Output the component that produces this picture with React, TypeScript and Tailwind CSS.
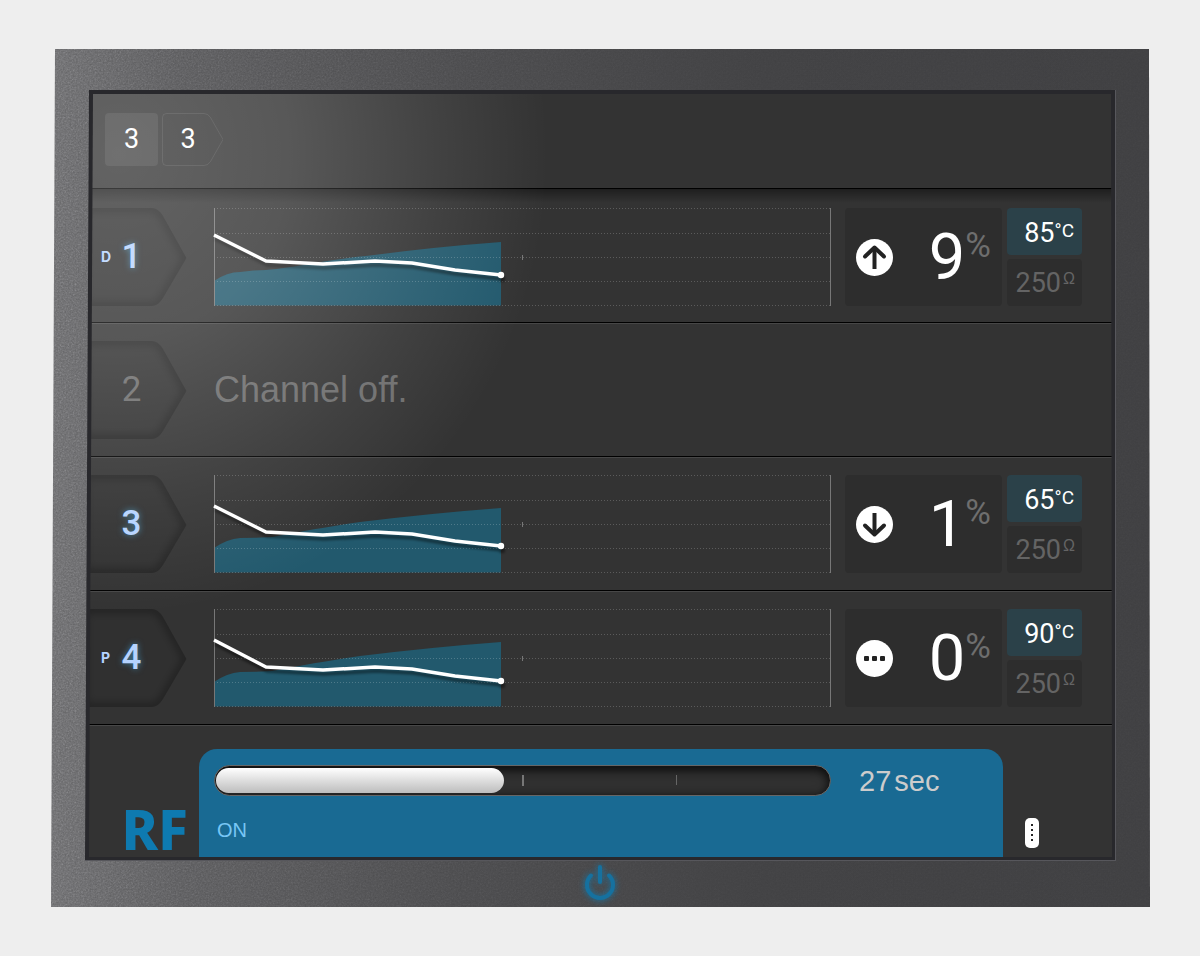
import React from 'react';
import clsx from 'clsx';

type Trend = 'up' | 'down' | 'steady';

type Channel = {
  id: number;
  tag?: string;
  on: boolean;
  trend?: Trend;
  percent?: number;
  temperature?: number;
  impedance?: number;
  area?: string;
  line?: string;
};

const EARLY_AREA =
  'M0 97.5V73Q13 64 26 64Q40 62 52 62C90 58 110 52 160 47Q220 39 287 34V97.5Z';
const LATE_AREA =
  'M0 97.5V73Q13 64 26 63Q42 63 58 62C80 58 110 52 146 47Q220 38 287 33V97.5Z';

const channels: Channel[] = [
  {
    id: 1,
    tag: 'D',
    on: true,
    trend: 'up',
    percent: 9,
    temperature: 85,
    impedance: 250,
    area: EARLY_AREA,
    line: '0,27 52,53 109,56 161,53 198,55 241,62 287,67',
  },
  { id: 2, on: false },
  {
    id: 3,
    on: true,
    trend: 'down',
    percent: 1,
    temperature: 65,
    impedance: 250,
    area: LATE_AREA,
    line: '0,31 52,57 109,60 161,57 198,59 241,66 287,71',
  },
  {
    id: 4,
    tag: 'P',
    on: true,
    trend: 'steady',
    percent: 0,
    temperature: 90,
    impedance: 250,
    area: LATE_AREA,
    line: '0,31 52,58 109,61 161,58 198,60 241,67 287,72',
  },
];

const TAG_PATH = 'M-6 0H63Q69 0 74 8L97.500 50L74 90Q69 98 63 98H-6Z';

const ChannelTag: React.FC<{ channel: Channel }> = ({ channel }) => (
  <button
    type="button"
    className="relative grid h-[98px] w-[98px] shrink-0 grid-cols-[30px_25px] items-center"
  >
    <svg className="absolute inset-0" width="98" height="98" viewBox="0 0 98 98" aria-hidden="true">
      <defs>
        <clipPath id={`tag-${channel.id}`}>
          <path d={TAG_PATH} />
        </clipPath>
        <filter id={`tag-blur-${channel.id}`}>
          <feGaussianBlur stdDeviation="4" />
        </filter>
      </defs>
      <g clipPath={`url(#tag-${channel.id})`}>
        <path d={TAG_PATH} fill="#000" fillOpacity="0.06" />
        <path
          d={TAG_PATH}
          fill="none"
          stroke="#000"
          strokeOpacity="0.4"
          strokeWidth="6"
          filter={`url(#tag-blur-${channel.id})`}
        />
      </g>
    </svg>
    <span className="relative pl-[12px] text-left font-['Inter'] text-[14px] leading-[98px] font-bold text-[#b5d3ff]">
      {channel.tag}
    </span>
    <span
      className={clsx(
        "relative text-center font-['Roboto'] text-[35px] leading-[94px]",
        channel.on ? 'font-medium text-[#b5d3ff] [text-shadow:0_0_6px_#3f7fa0]' : 'text-[#6c6c6c]'
      )}
    >
      {channel.id}
    </span>
  </button>
);

const Chart: React.FC<{ area?: string; line?: string }> = ({ area, line }) => (
  <svg
    className="h-[98px] min-w-0 flex-1 overflow-visible"
    viewBox="0 0 617 98"
    preserveAspectRatio="none"
    role="img"
    aria-label="Power and temperature trend"
  >
    <path d={area} fill="#22596d" />
    <g stroke="#fff" strokeOpacity="0.2" strokeDasharray="1 2">
      {[0.5, 25.5, 49.5, 73.5, 97.5].map((y) => (
        <line key={y} x1="0" x2="617" y1={y} y2={y} />
      ))}
    </g>
    <path d="M0.500 0V98M616.500 0V98" stroke="#777" />
    <path d="M308.500 47V52" stroke="#777" />
    <g className="[filter:drop-shadow(1px_4px_1px_rgba(0,0,0,0.4))]">
      <polyline points={line} fill="none" stroke="#fff" strokeWidth="3.500" strokeLinejoin="round" />
      <circle cx="287" cy={line?.split(',').pop()} r="3.200" fill="#fff" />
    </g>
  </svg>
);

const TrendIcon: React.FC<{ trend?: Trend }> = ({ trend }) => (
  <svg width="37" height="37" viewBox="0 0 37 37" className="shrink-0" role="img" aria-label={trend}>
    <circle cx="18.500" cy="18.500" r="18.500" fill="#fff" />
    {trend === 'steady' ? (
      <g fill="#222">
        <rect x="8" y="16" width="5" height="5" rx="1" />
        <rect x="16" y="16" width="5" height="5" rx="1" />
        <rect x="24" y="16" width="5" height="5" rx="1" />
      </g>
    ) : (
      <g
        fill="none"
        stroke="#222"
        strokeWidth="4"
        transform={trend === 'down' ? 'rotate(180 18.500 18.500)' : undefined}
      >
        <path d="M18.500 30V9" />
        <path
          d="M9 17.500L18.500 8.500L28 17.500"
          strokeLinecap="round"
          strokeLinejoin="round"
        />
      </g>
    )}
  </svg>
);

const Readings: React.FC<{ channel: Channel }> = ({ channel }) => (
  <div className="flex shrink-0 gap-[5px]">
    <div className="flex h-[98px] w-[157px] items-center rounded-[4px] bg-[#2d2d2d] px-[11px]">
      <TrendIcon trend={channel.trend} />
      <div className="ml-auto flex items-start font-['Roboto']">
        <span className="text-[65px] leading-[92px] text-white">{channel.percent}</span>
        <span className="text-[35px] leading-[70px] text-[#6e6e6e]">%</span>
      </div>
    </div>
    <div className="flex w-[75px] flex-col gap-[4px]">
      <div className="flex h-[47px] items-start justify-end rounded-[4px] bg-[#2b4149] pr-[8px] font-['Roboto'] text-white">
        <span className="text-[27px] leading-[50px]">{channel.temperature}</span>
        <span className="text-[19px] leading-[45px]">°C</span>
      </div>
      <div className="flex h-[47px] items-start justify-end gap-[2px] rounded-[4px] bg-[#2d2d2d] pr-[7px] text-[#646464]">
        <span className="font-['Roboto'] text-[27px] leading-[48px]">{channel.impedance}</span>
        <span className="text-[16px] leading-[39px]">Ω</span>
      </div>
    </div>
  </div>
);

const ChannelRow: React.FC<{ channel: Channel; first: boolean }> = ({ channel, first }) => (
  <li
    className={clsx(
      'flex border-t border-black pr-[30px]',
      first
        ? 'bg-[linear-gradient(rgba(0,0,0,0.4),transparent_14px)] pt-[19px] pb-[16px]'
        : 'pt-[18px] pb-[17px] shadow-[inset_0_1px_0_rgba(255,255,255,0.1)]'
    )}
  >
    <ChannelTag channel={channel} />
    {channel.on ? (
      <div className="ml-[27px] flex min-w-0 flex-1 gap-[14px]">
        <Chart area={channel.area} line={channel.line} />
        <Readings channel={channel} />
      </div>
    ) : (
      <p className="ml-[27px] text-[36px] leading-[98px] text-[#6c6c6c]">Channel off.</p>
    )}
  </li>
);

const TopBar: React.FC = () => (
  <header className="flex h-[94px] gap-[4px] pt-[19px] pl-[16px] font-['Roboto'] text-[27px] text-white">
    <button
      type="button"
      className="size-[53px] rounded-[4px] bg-white/8 text-center"
    >
      3
    </button>
    <button type="button" className="relative h-[53px] w-[61px] pr-[9px] text-center">
      <svg
        className="absolute inset-0"
        width="61"
        height="53"
        viewBox="0 0 61 53"
        fill="none"
        stroke="#fff"
        strokeOpacity="0.09"
        aria-hidden="true"
      >
        <path d="M4.500 0.500H42Q46 0.500 48.500 4.500L61 26.500L48.500 48.500Q46 52.500 42 52.500H4.500Q0.500 52.500 0.500 48.500V4.500Q0.500 0.500 4.500 0.500Z" />
      </svg>
      <span className="relative">3</span>
    </button>
  </header>
);

const StatusBar: React.FC = () => (
  <footer className="flex border-t border-black pt-[24px] shadow-[inset_0_1px_0_rgba(255,255,255,0.1)]">
    <div className="flex w-[110px] shrink-0 items-end justify-end pr-[11px]">
      <span className="font-['Noto_Sans'] text-[55px] leading-[56px] font-extrabold text-[#0e7ab0]">RF</span>
    </div>
    <div className="h-[108px] flex-1 rounded-t-[18px] bg-[#196a93] pt-[16px] pl-[15px]">
      <div className="flex items-center">
        <div
          className="relative h-[31px] flex-1 rounded-full border border-[#666] bg-[#303030] px-px py-[2px] shadow-[inset_0_3px_8px_2px_rgba(0,0,0,0.7)]"
          role="progressbar"
          aria-label="Treatment time"
          aria-valuenow={47}
        >
          <div className="h-full w-[47%] rounded-full bg-linear-to-b from-white to-[#bdbdbd]" />
          <span className="absolute top-[9px] left-1/2 h-[11px] w-[2px] -translate-x-1/2 bg-[#777]" />
          <span className="absolute top-[9px] left-3/4 h-[10px] w-px bg-[#666]" />
        </div>
        <p className="flex w-[172px] shrink-0 gap-[3px] pl-[28px] text-[29px] leading-[30px] text-[#ccc]">
          <span>27</span>
          <span>sec</span>
        </p>
      </div>
      <p className="mt-[19px] pl-[3px] text-[20px] leading-[30px] text-[#78c6f5]">ON</p>
    </div>
    <div className="flex w-[109px] shrink-0 items-end pb-[9px] pl-[22px]">
      <button type="button" aria-label="Menu">
        <svg width="14" height="30" viewBox="0 0 14 30" className="block">
          <rect width="14" height="30" rx="5" fill="#fff" />
          <g fill="#222">
            <rect x="6" y="6" width="2" height="2" />
            <rect x="6" y="11" width="2" height="2" />
            <rect x="6" y="16" width="2" height="2" />
            <rect x="6" y="21" width="2" height="2" />
          </g>
        </svg>
      </button>
    </div>
  </footer>
);

const PowerButton: React.FC = () => (
  <button
    type="button"
    aria-label="Power"
    className="mx-auto block [filter:drop-shadow(0_0_3px_#0e7ab0)]"
  >
    <svg width="32" height="36" viewBox="0 0 32 36" fill="none" stroke="#16719f" strokeWidth="4" strokeLinecap="round">
      <path d="M16 3V18" />
      <path d="M7 11.500A13 13 0 1 0 25 11.500" />
    </svg>
  </button>
);

// Grain of the moulded plastic, strongest where the light falls
const Grain: React.FC = () => (
  <svg
    className="absolute inset-0 h-full w-full opacity-60 mix-blend-overlay [mask-image:linear-gradient(to_right,black,rgba(0,0,0,0.25)_60%)]"
    aria-hidden="true"
  >
    <filter id="grain">
      <feTurbulence type="fractalNoise" baseFrequency="0.6" numOctaves="3" />
      <feColorMatrix type="saturate" values="0" />
    </filter>
    <rect width="100%" height="100%" filter="url(#grain)" />
  </svg>
);

export default function App() {
  return (
    <main className="min-h-screen bg-[#eee] px-[50px] py-[49px] font-['Liberation_Sans',sans-serif]">
      <div className="relative bg-[linear-gradient(to_right,#68686a,#59595b_12%,#4a4a4c_38%,#414143_65%,#3f3f41)] pt-[41px] pr-[34px] pl-[35px] [clip-path:polygon(5px_0,calc(100%-1px)_0,100%_100%,1px_100%)]">
        <Grain />
        <div className="relative border-r border-b border-[#57575c] bg-[#28282c] pt-[4px] pr-[3px] pb-[3px] pl-[4px] [clip-path:polygon(4px_0,100%_0,100%_100%,0_100%)]">
          <div className="relative bg-[#333] [clip-path:polygon(4px_0,calc(100%-1px)_0,100%_100%,0_100%)]">
            <TopBar />
            <ul>
              {channels.map((channel, index) => (
                <ChannelRow key={channel.id} channel={channel} first={index === 0} />
              ))}
            </ul>
            <StatusBar />
            {/* Light reflected by the glass */}
            <div className="pointer-events-none absolute inset-0 bg-[radial-gradient(430px_460px_at_30px_60px,rgba(255,255,255,0.24),rgba(255,255,255,0.18)_40%,rgba(255,255,255,0.07)_75%,transparent)]" />
          </div>
        </div>
        <div className="relative h-[46px] pt-[3px] pr-[2px]">
          <PowerButton />
        </div>
      </div>
    </main>
  );
}
